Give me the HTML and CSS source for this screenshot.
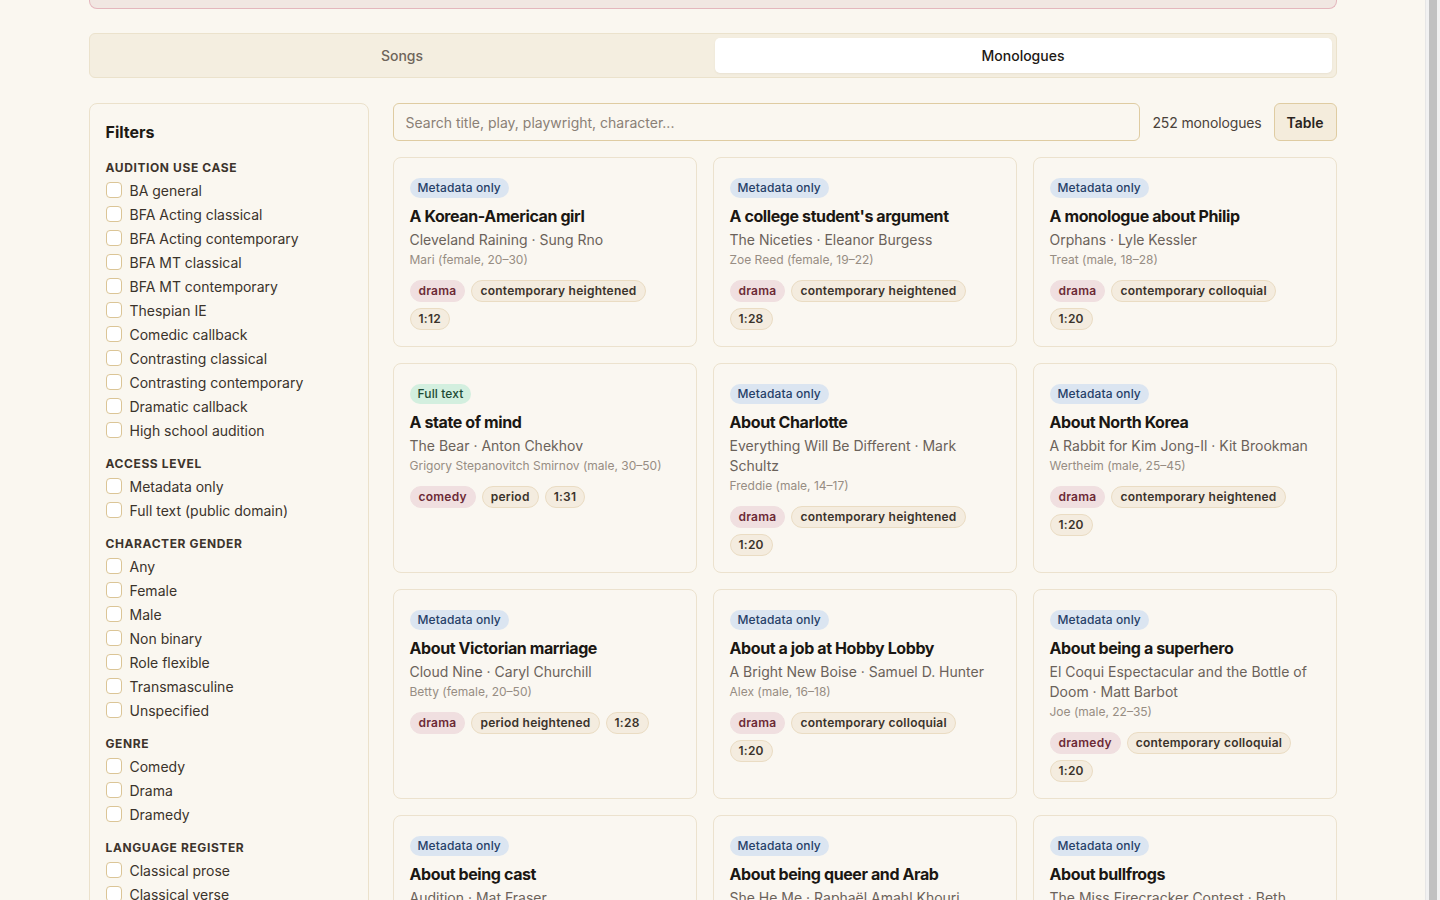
FILE: index.html
```html
<!DOCTYPE html>
<html lang="en">
<head>
  <meta charset="UTF-8">
  <title>Monologues</title>
  <meta name="viewport" content="width=device-width, initial-scale=1.0">
  <link rel="stylesheet" href="styles.css">
</head>
<body>
  <div class="page">
    <div class="wrap">
      <!-- notice strip (scrolled out of view) -->
      <div class="notice"></div>

      <!-- Songs / Monologues switch -->
      <div class="tabs">
        <button class="tab">Songs</button>
        <button class="tab active">Monologues</button>
      </div>

      <div class="layout">
        <!-- Filters -->
        <aside class="filters">
          <h2>Filters</h2>

          <div class="filter-group">
            <h3>Audition use case</h3>
            <label class="check"><span class="box"></span>BA general</label>
            <label class="check"><span class="box"></span>BFA Acting classical</label>
            <label class="check"><span class="box"></span>BFA Acting contemporary</label>
            <label class="check"><span class="box"></span>BFA MT classical</label>
            <label class="check"><span class="box"></span>BFA MT contemporary</label>
            <label class="check"><span class="box"></span>Thespian IE</label>
            <label class="check"><span class="box"></span>Comedic callback</label>
            <label class="check"><span class="box"></span>Contrasting classical</label>
            <label class="check"><span class="box"></span>Contrasting contemporary</label>
            <label class="check"><span class="box"></span>Dramatic callback</label>
            <label class="check"><span class="box"></span>High school audition</label>
          </div>

          <div class="filter-group">
            <h3>Access level</h3>
            <label class="check"><span class="box"></span>Metadata only</label>
            <label class="check"><span class="box"></span>Full text (public domain)</label>
          </div>

          <div class="filter-group">
            <h3>Character gender</h3>
            <label class="check"><span class="box"></span>Any</label>
            <label class="check"><span class="box"></span>Female</label>
            <label class="check"><span class="box"></span>Male</label>
            <label class="check"><span class="box"></span>Non binary</label>
            <label class="check"><span class="box"></span>Role flexible</label>
            <label class="check"><span class="box"></span>Transmasculine</label>
            <label class="check"><span class="box"></span>Unspecified</label>
          </div>

          <div class="filter-group">
            <h3>Genre</h3>
            <label class="check"><span class="box"></span>Comedy</label>
            <label class="check"><span class="box"></span>Drama</label>
            <label class="check"><span class="box"></span>Dramedy</label>
          </div>

          <div class="filter-group">
            <h3>Language register</h3>
            <label class="check"><span class="box"></span>Classical prose</label>
            <label class="check"><span class="box"></span>Classical verse</label>
            <label class="check"><span class="box"></span>Contemporary colloquial</label>
            <label class="check"><span class="box"></span>Contemporary heightened</label>
          </div>
        </aside>

        <!-- Results -->
        <main class="results">
          <div class="toolbar">
            <input class="search" type="text" placeholder="Search title, play, playwright, character...">
            <span class="count">252 monologues</span>
            <button class="view-btn">Table</button>
          </div>

          <div class="grid">
            <article class="card">
              <span class="badge meta">Metadata only</span>
              <h4>A Korean-American girl</h4>
              <p class="play">Cleveland Raining · Sung Rno</p>
              <p class="role">Mari (female, 20–30)</p>
              <div class="tags"><span class="tag genre">drama</span><span class="tag">contemporary heightened</span><span class="tag">1:12</span></div>
            </article>

            <article class="card">
              <span class="badge meta">Metadata only</span>
              <h4>A college student's argument</h4>
              <p class="play">The Niceties · Eleanor Burgess</p>
              <p class="role">Zoe Reed (female, 19–22)</p>
              <div class="tags"><span class="tag genre">drama</span><span class="tag">contemporary heightened</span><span class="tag">1:28</span></div>
            </article>

            <article class="card">
              <span class="badge meta">Metadata only</span>
              <h4>A monologue about Philip</h4>
              <p class="play">Orphans · Lyle Kessler</p>
              <p class="role">Treat (male, 18–28)</p>
              <div class="tags"><span class="tag genre">drama</span><span class="tag">contemporary colloquial</span><span class="tag">1:20</span></div>
            </article>

            <article class="card">
              <span class="badge full">Full text</span>
              <h4>A state of mind</h4>
              <p class="play">The Bear · Anton Chekhov</p>
              <p class="role">Grigory Stepanovitch Smirnov (male, 30–50)</p>
              <div class="tags"><span class="tag genre">comedy</span><span class="tag">period</span><span class="tag">1:31</span></div>
            </article>

            <article class="card">
              <span class="badge meta">Metadata only</span>
              <h4>About Charlotte</h4>
              <p class="play">Everything Will Be Different · Mark Schultz</p>
              <p class="role">Freddie (male, 14–17)</p>
              <div class="tags"><span class="tag genre">drama</span><span class="tag">contemporary heightened</span><span class="tag">1:20</span></div>
            </article>

            <article class="card">
              <span class="badge meta">Metadata only</span>
              <h4>About North Korea</h4>
              <p class="play">A Rabbit for Kim Jong-Il · Kit Brookman</p>
              <p class="role">Wertheim (male, 25–45)</p>
              <div class="tags"><span class="tag genre">drama</span><span class="tag">contemporary heightened</span><span class="tag">1:20</span></div>
            </article>

            <article class="card">
              <span class="badge meta">Metadata only</span>
              <h4>About Victorian marriage</h4>
              <p class="play">Cloud Nine · Caryl Churchill</p>
              <p class="role">Betty (female, 20–50)</p>
              <div class="tags"><span class="tag genre">drama</span><span class="tag">period heightened</span><span class="tag">1:28</span></div>
            </article>

            <article class="card">
              <span class="badge meta">Metadata only</span>
              <h4>About a job at Hobby Lobby</h4>
              <p class="play">A Bright New Boise · Samuel D. Hunter</p>
              <p class="role">Alex (male, 16–18)</p>
              <div class="tags"><span class="tag genre">drama</span><span class="tag">contemporary colloquial</span><span class="tag">1:20</span></div>
            </article>

            <article class="card">
              <span class="badge meta">Metadata only</span>
              <h4>About being a superhero</h4>
              <p class="play">El Coqui Espectacular and the Bottle of Doom · Matt Barbot</p>
              <p class="role">Joe (male, 22–35)</p>
              <div class="tags"><span class="tag genre">dramedy</span><span class="tag">contemporary colloquial</span><span class="tag">1:20</span></div>
            </article>

            <article class="card">
              <span class="badge meta">Metadata only</span>
              <h4>About being cast</h4>
              <p class="play">Audition · Mat Fraser</p>
              <p class="role">Mat (male, 30–50)</p>
              <div class="tags"><span class="tag genre">drama</span><span class="tag">contemporary colloquial</span><span class="tag">1:30</span></div>
            </article>

            <article class="card">
              <span class="badge meta">Metadata only</span>
              <h4>About being queer and Arab</h4>
              <p class="play">She He Me · Raphaël Amahl Khouri</p>
              <p class="role">Randa (female, 25–40)</p>
              <div class="tags"><span class="tag genre">drama</span><span class="tag">contemporary colloquial</span><span class="tag">1:25</span></div>
            </article>

            <article class="card">
              <span class="badge meta">Metadata only</span>
              <h4>About bullfrogs</h4>
              <p class="play">The Miss Firecracker Contest · Beth Henley</p>
              <p class="role">Carnelle (female, 20–30)</p>
              <div class="tags"><span class="tag genre">comedy</span><span class="tag">contemporary colloquial</span><span class="tag">1:15</span></div>
            </article>
          </div>
        </main>
      </div>
    </div>
  </div>

  <div class="scrollbar"><div class="thumb"></div></div>
</body>
</html>
```

FILE: styles.css
```css
* {
  box-sizing: border-box;
}

html, body {
  height: 100%;
}

body {
  margin: 0;
  display: flex;
  overflow: hidden;
  font-family: Inter, 'Noto Sans', sans-serif;
  font-size: 14px;
  color: #3b332b;
  background-color: #faf7f0;
}

.page {
  flex: 1;
  height: 100vh;
  overflow: hidden;
}

.wrap {
  max-width: 1280px;
  margin: 0 auto;
  padding: 0 16px;
}

/* fake scrollbar on the right */
.scrollbar {
  width: 15px;
  height: 100vh;
  flex-shrink: 0;
  background: #f1f1f1;
  border-left: 1px solid #e6e6e6;
  padding: 0 3px 0 3px;
}

.thumb {
  height: 100%;
  background: #c1c1c1;
}

.notice {
  height: 9px;
  background: #f1e7e2;
  border: 1px solid #e4b7bd;
  border-top: none;
  border-radius: 0 0 8px 8px;
}

.tabs {
  margin-top: 24px;
  display: grid;
  grid-template-columns: 1fr 1fr;
  gap: 4px;
  padding: 4px;
  background: #f4eee0;
  border: 1px solid #ebe2cc;
  border-radius: 6px;
}

.tab {
  height: 35px;
  border: none;
  border-radius: 5px;
  background: transparent;
  font-family: inherit;
  font-size: 14px;
  font-weight: 500;
  color: #6e655b;
}

.tab.active {
  background: #fff;
  color: #1d1914;
  box-shadow: 0 1px 2px rgba(120, 100, 60, 0.08);
}

.layout {
  margin-top: 25px;
  display: grid;
  grid-template-columns: 280px 1fr;
  gap: 24px;
  align-items: start;
}

/* Filters */
.filters {
  border: 1px solid #ebe1cb;
  border-radius: 8px;
  padding: 16px;
}

.filters h2 {
  margin: 0 0 16px;
  font-size: 16px;
  line-height: 24px;
  font-weight: 700;
  color: #1d1914;
}

.filter-group {
  margin-bottom: 14px;
}

.filter-group h3 {
  margin: 0 0 2px;
  font-size: 12px;
  line-height: 16px;
  font-weight: 700;
  letter-spacing: 0.05em;
  text-transform: uppercase;
  color: #3d342c;
}

.check {
  display: flex;
  align-items: center;
  gap: 8px;
  height: 24px;
  font-size: 14px;
  color: #3b332b;
}

.box {
  width: 16px;
  height: 16px;
  border: 1px solid #dbc596;
  border-radius: 4px;
  background: #fff;
}

/* Results */
.toolbar {
  display: flex;
  align-items: center;
  gap: 12px;
}

.search {
  flex: 1;
  height: 38px;
  padding: 0 12px;
  border: 1px solid #dfcca2;
  border-radius: 6px;
  background: #faf7f0;
  font-family: inherit;
  font-size: 14px;
  color: #3b332b;
}

.search::placeholder {
  color: #8a8076;
}

.count {
  color: #4a423a;
  letter-spacing: -0.01em;
}

.view-btn {
  height: 38px;
  padding: 0 12px;
  border: 1px solid #dfcca2;
  border-radius: 6px;
  background: #f4ecdc;
  font-family: inherit;
  font-size: 14px;
  font-weight: 600;
  color: #2a241e;
}

.grid {
  margin-top: 16px;
  display: grid;
  grid-template-columns: repeat(3, 1fr);
  gap: 16px;
}

.card {
  border: 1px solid #ece2ce;
  border-radius: 8px;
  padding: 20px 16px 16px;
  background: #faf7f1;
}

.badge {
  display: inline-block;
  padding: 2px 8px;
  border-radius: 999px;
  font-size: 12px;
  line-height: 16px;
  font-weight: 500;
  letter-spacing: 0.01em;
}

.badge.meta {
  background: #dbe5f1;
  color: #263f68;
}

.badge.full {
  background: #d3efdf;
  color: #1e4a34;
}

.card h4 {
  margin: 6px 0 0;
  font-size: 16px;
  line-height: 24px;
  font-weight: 700;
  letter-spacing: -0.025em;
  color: #1b1713;
}

.play {
  margin: 2px 0 0;
  font-size: 14px;
  line-height: 20px;
  color: #6b625a;
}

.role {
  margin: 2px 0 0;
  font-size: 12px;
  line-height: 16px;
  color: #978d83;
}

.tags {
  margin-top: 12px;
  display: flex;
  flex-wrap: wrap;
  gap: 6px;
}

.tag {
  padding: 2px 8px;
  border: 1px solid #eadcc3;
  border-radius: 999px;
  background: #f4ecdf;
  font-size: 12px;
  line-height: 16px;
  font-weight: 600;
  letter-spacing: 0.02em;
  color: #3b332b;
}

.tag.genre {
  background: #f0dfe0;
  border-color: #f0dfe0;
  color: #6c2a36;
}
```
